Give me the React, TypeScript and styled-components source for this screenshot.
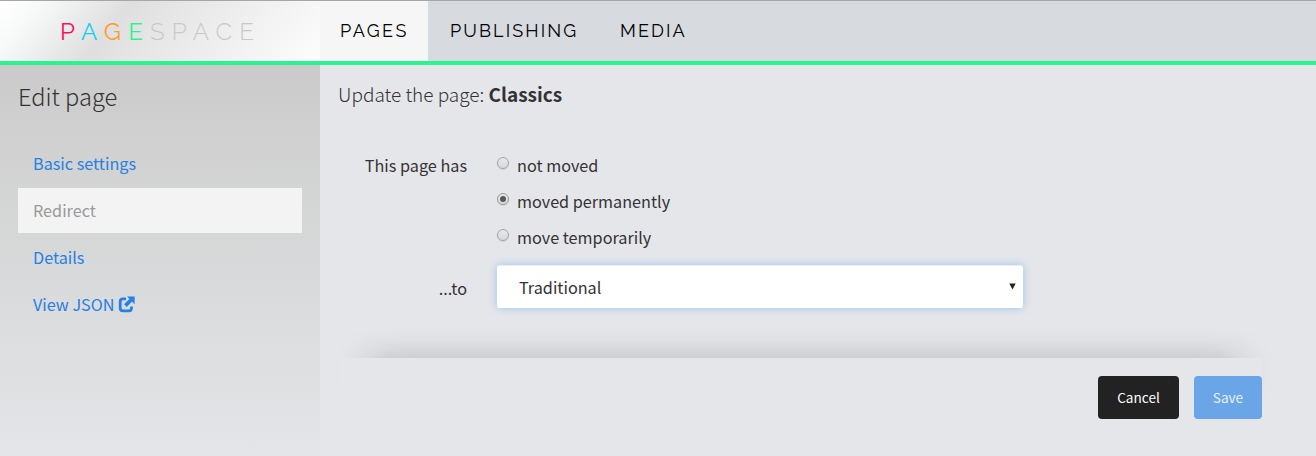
import React from "react";
import styled, { createGlobalStyle } from "styled-components";

const GlobalStyle = createGlobalStyle`
  * { box-sizing: border-box; }
  body {
    margin: 0;
    background: #e5e6ea;
    color: #333;
    font-family: "Noto Sans CJK SC", "Source Sans Pro", sans-serif;
    font-size: 16.22px;
    overflow: hidden;
  }
`;

const Header = styled.header`
  display: flex;
  height: 65px;
  border-top: 1px solid #a6a6a8;
  border-bottom: 4px solid #2bf391;
  background: #d7dadf;
`;

const Brand = styled.a`
  width: 320px;
  padding-left: 60px;
  line-height: 61px;
  font-family: Raleway, Lato, sans-serif;
  font-weight: 300;
  font-size: 24px;
  letter-spacing: 7.2px;
  color: #c8c8c8;
  background: linear-gradient(130deg, #ffffff 0%, #f7f8f8 12%, #dfdfdf 36%, #e7e7e7 52%, #fdfdfd 100%);
`;

const Letter = styled.span<{ $color: string }>`
  color: ${(p) => p.$color};
  font-weight: 400;
`;

const Nav = styled.nav`
  display: flex;
`;

const NavItem = styled.a<{ $active?: boolean; $width: number; $spacing: number }>`
  width: ${(p) => p.$width}px;
  padding-left: ${(p) => (p.$active ? 20 : 22)}px;
  line-height: 59px;
  font-family: Raleway, Lato, sans-serif;
  font-size: 18px;
  letter-spacing: ${(p) => p.$spacing}px;
  color: #000;
  background: ${(p) => (p.$active ? "#f6f6f6" : "transparent")};
`;

const Layout = styled.div`
  display: flex;
  height: 391px;
`;

const Sidebar = styled.aside`
  width: 320px;
  padding: 11px 18px;
  background: linear-gradient(#cacaca, #d0d1d0 20%, #e4e5e8);
`;

const SidebarTitle = styled.h2`
  margin: 0 0 25px;
  font-weight: 300;
  font-size: 23.6px;
  line-height: 40px;
`;

const MenuItem = styled.a<{ $active?: boolean }>`
  display: flex;
  align-items: center;
  height: 45px;
  margin-bottom: 2px;
  padding: 0 0 2px 15px;
  color: ${(p) => (p.$active ? "#999" : "#2780e3")};
  background: ${(p) => (p.$active ? "#f3f3f3" : "transparent")};
  svg { margin: 1px 0 0 3px; }
`;

const Main = styled.main`
  width: 942px;
  padding: 13px 0 0 18px;
`;

const Intro = styled.p`
  margin: 0 0 35px;
  font-size: 19px;
  line-height: 32px;
  font-weight: 300;
  strong { font-weight: 700; }
`;

const FormRow = styled.div`
  display: flex;
`;

const Label = styled.label<{ $offset?: number }>`
  width: 129px;
  margin-right: 30px;
  padding-top: ${(p) => p.$offset ?? 0}px;
  text-align: right;
  line-height: 40px;
`;

const Option = styled.label`
  display: flex;
  height: 36px;
  line-height: 40px;
`;

const Radio = styled.span<{ $checked?: boolean }>`
  display: flex;
  align-items: center;
  justify-content: center;
  width: 12px;
  height: 12px;
  margin: 12px 8px 0 0;
  border: 1px solid ${(p) => (p.$checked ? "#999" : "#a4a4a4")};
  border-radius: 50%;
  background: linear-gradient(#e9e9e9, #d9d9d9);
  box-shadow: 0 1px 1px rgba(0, 0, 0, 0.1);
  &::after {
    content: "";
    width: 6px;
    height: 6px;
    border-radius: 50%;
    background: ${(p) => (p.$checked ? "#585858" : "transparent")};
  }
`;

const SelectBox = styled.div`
  display: flex;
  align-items: center;
  justify-content: space-between;
  width: 526px;
  height: 43px;
  margin-top: 12px;
  padding: 0 7px 0 22px;
  border-radius: 2px;
  background: #fff;
  box-shadow: inset 0 1px 1px rgba(0, 0, 0, 0.075), 0 0 8px rgba(102, 175, 233, 0.6);
  svg { margin-top: 0; }
`;

const Footer = styled.footer`
  display: flex;
  justify-content: flex-end;
  gap: 15px;
  height: 61px;
  margin-top: 50px;
  padding-top: 18px;
  background: #e5e6ea;
  box-shadow: 4px -16px 34px -27px rgba(0, 0, 0, 0.85);
`;

const Button = styled.button<{ $primary?: boolean }>`
  width: ${(p) => (p.$primary ? 68 : 81)}px;
  height: 43px;
  padding: 0 0 1px;
  border: 0;
  border-radius: 4px;
  font: inherit;
  font-size: 13.6px;
  color: ${(p) => (p.$primary ? "#e6f0fa" : "#fff")};
  background: ${(p) => (p.$primary ? "#6aa6e7" : "#222")};
`;

const ExternalIcon = () => (
  <svg width="17" height="17" viewBox="0 0 17 17" fill="none" stroke="#2780e3">
    <path d="M8 2.9H5Q2.2 2.9 2.2 5.7V12Q2.2 14.8 5 14.8H10.8Q13.5 14.8 13.5 12V10.4" strokeWidth="2.8" />
    <path d="M7.4 9.6L13 4" strokeWidth="3.8" />
    <path d="M9 .6H16.6V8.2Z" fill="#2780e3" stroke="none" />
  </svg>
);

const options = ["not moved", "moved permanently", "move temporarily"];

export default function App() {
  return (
    <>
      <GlobalStyle />
      <Header>
        <Brand>
          <Letter $color="#ff0f62">P</Letter>
          <Letter $color="#13d0f2">A</Letter>
          <Letter $color="#fd9e2a">G</Letter>
          <Letter $color="#2bf391">E</Letter>
          SPACE
        </Brand>
        <Nav>
          <NavItem $active $width={108} $spacing={2.4}>PAGES</NavItem>
          <NavItem $width={170} $spacing={2.1}>PUBLISHING</NavItem>
          <NavItem $width={108} $spacing={2.1}>MEDIA</NavItem>
        </Nav>
      </Header>
      <Layout>
        <Sidebar>
          <SidebarTitle>Edit page</SidebarTitle>
          <MenuItem>Basic settings</MenuItem>
          <MenuItem $active>Redirect</MenuItem>
          <MenuItem>Details</MenuItem>
          <MenuItem>View JSON<ExternalIcon /></MenuItem>
        </Sidebar>
        <Main>
          <Intro>Update the page: <strong>Classics</strong></Intro>
          <FormRow>
            <Label>This page has</Label>
            <div>
              {options.map((o, i) => (
                <Option key={o}><Radio $checked={i === 1} />{o}</Option>
              ))}
            </div>
          </FormRow>
          <FormRow>
            <Label $offset={15}>...to</Label>
            <SelectBox>
              Traditional
              <svg width="7" height="7" viewBox="0 0 7 7"><path d="M.3 .5H6.7L3.5 6.5Z" fill="#222" /></svg>
            </SelectBox>
          </FormRow>
          <Footer>
            <Button>Cancel</Button>
            <Button $primary>Save</Button>
          </Footer>
        </Main>
      </Layout>
    </>
  );
}
